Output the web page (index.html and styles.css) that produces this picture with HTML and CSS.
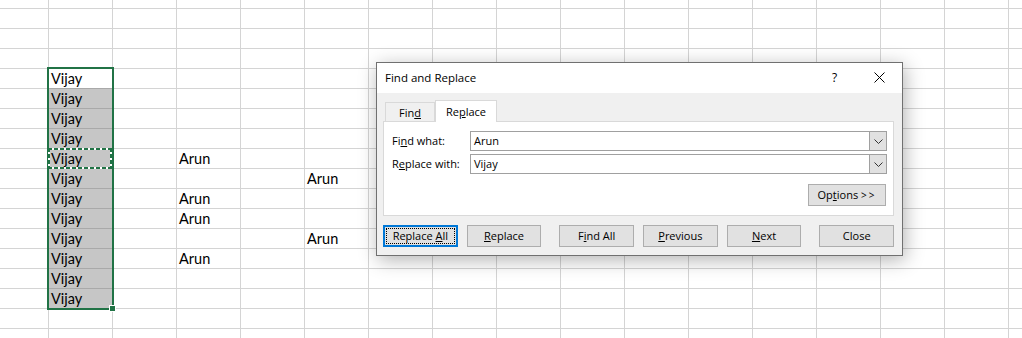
FILE: index.html
```html
<!DOCTYPE html>
<html>
<head>
<meta charset="utf-8">
<link rel="stylesheet" href="styles.css">
</head>
<body>
<div class="sheet">
  <div class="cell cb r5">Vijay</div>
  <div class="cell cb sel r6">Vijay</div>
  <div class="cell cb sel r7">Vijay</div>
  <div class="cell cb sel r8">Vijay</div>
  <div class="cell cb sel r9">Vijay</div>
  <div class="cell cb sel r10">Vijay</div>
  <div class="cell cb sel r11">Vijay</div>
  <div class="cell cb sel r12">Vijay</div>
  <div class="cell cb sel r13">Vijay</div>
  <div class="cell cb sel r14">Vijay</div>
  <div class="cell cb sel r15">Vijay</div>
  <div class="cell cb sel r16">Vijay</div>

  <div class="cell cd r9">Arun</div>
  <div class="cell cd r11">Arun</div>
  <div class="cell cd r12">Arun</div>
  <div class="cell cd r14">Arun</div>
  <div class="cell cf r10">Arun</div>
  <div class="cell cf r13">Arun</div>

  <div class="selection"><span class="handle"></span></div>
  <div class="marquee"></div>

  <div class="dialog">
    <div class="titlebar">
      <span class="title">Find and Replace</span>
      <span class="capbtn help">?</span>
      <span class="capbtn close">
        <svg width="11" height="11" viewBox="0 0 11 11"><path d="M0.5 0.5 L10.5 10.5 M10.5 0.5 L0.5 10.5" stroke="#000" stroke-width="1" fill="none"/></svg>
      </span>
    </div>
    <div class="content">
      <div class="tabs">
        <div class="tab">Fin<u>d</u></div>
        <div class="tab active">Re<u>p</u>lace</div>
      </div>
      <div class="panel">
        <div class="row">
          <span class="label">Fi<u>n</u>d what:</span>
          <div class="combo"><span class="val">Arun</span><span class="drop"><svg width="9" height="5" viewBox="0 0 9 5"><path d="M0.5 0.5 L4.5 4.5 L8.5 0.5" stroke="#333" fill="none"/></svg></span></div>
        </div>
        <div class="row second">
          <span class="label">R<u>e</u>place with:</span>
          <div class="combo"><span class="val">Vijay</span><span class="drop"><svg width="9" height="5" viewBox="0 0 9 5"><path d="M0.5 0.5 L4.5 4.5 L8.5 0.5" stroke="#333" fill="none"/></svg></span></div>
        </div>
        <div class="optrow">
          <div class="btn options"><span>Op<u>t</u>ions <span class="arrows">&gt;&gt;</span></span></div>
        </div>
      </div>
      <div class="buttons">
        <div class="btn focus"><span>Replace <u>A</u>ll</span></div>
        <div class="btn g9"><span><u>R</u>eplace</span></div>
        <div class="btn g18"><span>F<u>i</u>nd All</span></div>
        <div class="btn g9"><span><u>P</u>revious</span></div>
        <div class="btn g9"><span><u>N</u>ext</span></div>
        <div class="btn g18"><span>Close</span></div>
      </div>
    </div>
  </div>
</div>
</body>
</html>
```

FILE: styles.css
```css
html, body {
  margin: 0;
  padding: 0;
  background: #fff;
}

.sheet {
  position: relative;
  width: 1022px;
  height: 338px;
  overflow: hidden;
  display: grid;
  grid-template-columns: 48px repeat(16, 64px);
  grid-template-rows: 8px repeat(17, 20px);
  background-color: #fff;
  background-image:
    linear-gradient(to right, #d4d4d4 1px, transparent 1px),
    linear-gradient(to bottom, #d4d4d4 1px, transparent 1px);
  background-size: 64px 100%, 100% 20px;
  background-position: 48px 0, 0 8px;
  font-family: "Lato", "Liberation Sans", sans-serif;
  font-size: 14.5px;
  color: #000;
}

.cell {
  display: flex;
  align-items: flex-end;
  padding: 0 0 1px 3px;
  line-height: 17px;
  white-space: nowrap;
}

.cb { grid-column: 2; }
.cd { grid-column: 4; }
.cf { grid-column: 6; }

.r5 { grid-row: 5; }
.r6 { grid-row: 6; }
.r7 { grid-row: 7; }
.r8 { grid-row: 8; }
.r9 { grid-row: 9; }
.r10 { grid-row: 10; }
.r11 { grid-row: 11; }
.r12 { grid-row: 12; }
.r13 { grid-row: 13; }
.r14 { grid-row: 14; }
.r15 { grid-row: 15; }
.r16 { grid-row: 16; }

.sel {
  background:
    linear-gradient(#a9a9a9, #a9a9a9) top left / 100% 1px no-repeat,
    #c6c6c6;
}

.r5.cb { background: #fff; }

.selection {
  grid-column: 2;
  grid-row: 5 / 17;
  margin: -1px -2px -2px -1px;
  border: 2px solid #217346;
  position: relative;
  z-index: 2;
}

.handle {
  position: absolute;
  right: -4px;
  bottom: -4px;
  width: 5px;
  height: 5px;
  background: #217346;
  border: 1px solid #fff;
}

.marquee {
  grid-column: 2;
  grid-row: 9;
  margin-bottom: -1px;
  z-index: 3;
  background:
    repeating-linear-gradient(to right, #217346 0 4px, #fff 4px 6px) top left / 100% 2px no-repeat,
    repeating-linear-gradient(to right, #217346 0 4px, #fff 4px 6px) bottom left / 100% 2px no-repeat,
    repeating-linear-gradient(to bottom, #217346 0 4px, #fff 4px 6px) top left / 2px 100% no-repeat,
    repeating-linear-gradient(to bottom, #217346 0 4px, #fff 4px 6px) top right / 2px 100% no-repeat;
}

/* Dialog */
.dialog {
  position: absolute;
  left: 376px;
  top: 62px;
  width: 527px;
  height: 194px;
  box-sizing: border-box;
  border: 1px solid #707070;
  background: #f0f0f0;
  box-shadow: 2px 4px 18px rgba(0, 0, 0, 0.3);
  font-family: "Open Sans", "Liberation Sans", sans-serif;
  font-size: 11px;
  color: #000;
  display: flex;
  flex-direction: column;
  z-index: 10;
}

.titlebar {
  height: 30px;
  flex: none;
  background: #fff;
  display: flex;
  align-items: center;
  padding-left: 8px;
  padding-bottom: 2px;
  box-sizing: border-box;
  font-size: 11.5px;
}

.title {
  flex: 1;
}

.capbtn {
  width: 45px;
  height: 28px;
  display: flex;
  align-items: center;
  justify-content: center;
}

.help {
  font-size: 12px;
}

.content {
  padding: 7px 8px 0 6px;
}

.tabs {
  display: flex;
  align-items: flex-end;
  height: 22px;
  margin-bottom: -1px;
  padding-left: 2px;
  position: relative;
  z-index: 1;
}

.tab {
  box-sizing: border-box;
  height: 19px;
  width: 50px;
  border: 1px solid #d9d9d9;
  border-bottom: none;
  margin-bottom: 1px;
  text-align: center;
  line-height: 19px;
  background: #f0f0f0;
}

.tab.active {
  width: 62px;
  height: 22px;
  margin-bottom: 0;
  background: #fff;
  line-height: 21px;
}

.panel {
  box-sizing: border-box;
  height: 95px;
  background: #fff;
  border: 1px solid #d9d9d9;
  padding: 9px 6px 0 8px;
}

.row {
  display: flex;
  align-items: center;
  height: 20px;
}

.row.second {
  margin-top: 3px;
}

.label {
  width: 78px;
  flex: none;
  line-height: 18px;
}

.combo {
  flex: 1;
  height: 20px;
  box-sizing: border-box;
  border: 1px solid #a0a0a0;
  display: flex;
  align-items: stretch;
  background: #fff;
}

.val {
  flex: 1;
  padding-left: 3px;
  line-height: 17px;
}

.drop {
  width: 16px;
  flex: none;
  background: #e1e1e1;
  border-left: 1px solid #a0a0a0;
  display: flex;
  align-items: center;
  justify-content: center;
}

.optrow {
  display: flex;
  justify-content: flex-end;
  margin-top: 10px;
  padding-right: 1px;
}

.btn {
  box-sizing: border-box;
  width: 75px;
  height: 22px;
  border: 1px solid #adadad;
  background: #e1e1e1;
  display: flex;
  align-items: center;
  justify-content: center;
  white-space: nowrap;
  padding-bottom: 2px;
}

.btn.options {
  width: 78px;
}

.arrows {
  letter-spacing: 2px;
  font-size: 10px;
}

.buttons {
  display: flex;
  margin-top: 9px;
}

.btn.focus {
  border: 2px solid #0078d7;
  outline: 1px dotted #000;
  outline-offset: -4px;
}

.g9 { margin-left: 9px; }
.g18 { margin-left: 18px; }
```
